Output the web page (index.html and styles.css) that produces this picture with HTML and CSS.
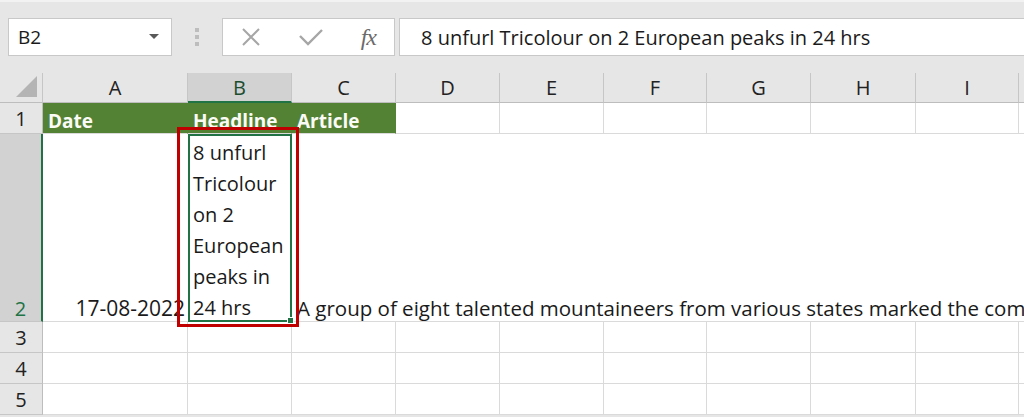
FILE: index.html
```html
<!DOCTYPE html>
<html lang="en">
<head>
    <meta charset="UTF-8">
    <meta name="viewport" content="width=device-width, initial-scale=1.0">
    <link rel="stylesheet" href="styles.css">
</head>
<body>
    <div class="ribbon">
        <div class="namebox">
            <span>B2</span>
            <svg class="drop" width="10" height="6" viewBox="0 0 10 6"><path d="M0 0h10L5 5z" fill="#595959"/></svg>
        </div>
        <div class="grip"><i></i><i></i><i></i></div>
        <div class="fbtns">
            <svg width="20" height="20" viewBox="0 0 20 20"><path d="M2 2L18 18M18 2L2 18" stroke="#a6a6a6" stroke-width="2" fill="none"/></svg>
            <svg width="24" height="18" viewBox="0 0 24 18"><path d="M1 8l8 8L23 2" stroke="#a6a6a6" stroke-width="2.4" fill="none"/></svg>
            <span class="fx">fx</span>
        </div>
        <div class="fbar">8 unfurl Tricolour on 2 European peaks in 24 hrs</div>
    </div>
    <div class="sheet">
        <div class="corner"><svg width="24" height="22" viewBox="0 0 24 22"><path d="M22 0V21H1z" fill="#b4b4b4"/></svg></div>
        <div class="ch">A</div>
        <div class="ch sel">B</div>
        <div class="ch">C</div>
        <div class="ch">D</div>
        <div class="ch">E</div>
        <div class="ch">F</div>
        <div class="ch">G</div>
        <div class="ch">H</div>
        <div class="ch">I</div>
        <div class="ch last"></div>

        <div class="rh">1</div>
        <div class="c head">Date</div>
        <div class="c head">Headline</div>
        <div class="c head">Article</div>
        <div class="c"></div><div class="c"></div><div class="c"></div><div class="c"></div><div class="c"></div><div class="c"></div><div class="c"></div>

        <div class="rh sel">2</div>
        <div class="c date">17-08-2022</div>
        <div class="c active">
            <div class="wrap">8 unfurl<br>Tricolour<br>on 2<br>European<br>peaks in<br>24 hrs</div>
            <span class="handle"></span>
            <span class="mark"></span>
        </div>
        <div class="c article">A group of eight talented mountaineers from various states marked the completion of 75 years of India's independence by unfurling the Tricolour</div>

        <div class="rh">3</div>
        <div class="c"></div><div class="c"></div><div class="c"></div><div class="c"></div><div class="c"></div><div class="c"></div><div class="c"></div><div class="c"></div><div class="c"></div><div class="c"></div>
        <div class="rh">4</div>
        <div class="c"></div><div class="c"></div><div class="c"></div><div class="c"></div><div class="c"></div><div class="c"></div><div class="c"></div><div class="c"></div><div class="c"></div><div class="c"></div>
        <div class="rh">5</div>
        <div class="c"></div><div class="c"></div><div class="c"></div><div class="c"></div><div class="c"></div><div class="c"></div><div class="c"></div><div class="c"></div><div class="c"></div><div class="c"></div>
    </div>
</body>
</html>
```

FILE: styles.css
```css
body {
    margin: 0;
    background: #e6e6e6;
    font-family: "Open Sans", "Noto Sans", sans-serif;
    color: #1a1a1a;
    overflow: hidden;
}
.ribbon {
    display: flex;
    align-items: stretch;
    height: 38px;
    padding: 16px 0 17px 8px;
    border-top: 2px solid #f2f2f2;
}
.namebox {
    width: 164px;
    box-sizing: border-box;
    background: #fff;
    border: 1px solid #c8c8c8;
    display: flex;
    align-items: center;
    justify-content: space-between;
    padding: 0 12px 0 9px;
    font-size: 19px;
}
.grip {
    width: 50px;
    display: flex;
    flex-direction: column;
    align-items: center;
    justify-content: center;
    gap: 3px;
}
.grip i {
    width: 4px;
    height: 4px;
    background: #bdbdbd;
}
.fbtns {
    width: 173px;
    box-sizing: border-box;
    background: #fff;
    border: 1px solid #c8c8c8;
    display: flex;
    align-items: center;
    padding: 0 18px 0 18px;
    justify-content: space-between;
}
.fx {
    font-family: "Liberation Serif", serif;
    font-style: italic;
    font-size: 24px;
    color: #6b6b6b;
    letter-spacing: -1px;
}
.fbar {
    flex: 1;
    margin-left: 4px;
    margin-right: -2px;
    background: #fff;
    border: 1px solid #c8c8c8;
    display: flex;
    align-items: center;
    padding-left: 21px;
    font-size: 20px;
    white-space: nowrap;
    overflow: hidden;
}
.sheet {
    display: grid;
    grid-template-columns: 43px 145px 104px 104px 104px 104px 103px 104px 105px 103px 1fr;
    grid-template-rows: 30px 31px 188px 31px 31px 31px;
    background: #fff;
    font-size: 19px;
}
.corner {
    background: #e6e6e6;
    border-right: 1px solid #c6c6c6;
    border-bottom: 1px solid #bdbdbd;
    display: flex;
    align-items: flex-end;
    justify-content: flex-end;
    padding: 0 3px 4px 0;
}
.ch {
    background: #e6e6e6;
    border-right: 1px solid #c6c6c6;
    border-bottom: 1px solid #bdbdbd;
    display: flex;
    align-items: center;
    justify-content: center;
    color: #222;
    font-size: 20px;
}
.ch.sel {
    background: #d2d2d2;
    border-bottom: 2px solid #217346;
    color: #1d4d30;
}
.ch.last {
    border-right: none;
}
.rh {
    background: #e6e6e6;
    border-right: 1px solid #bdbdbd;
    border-bottom: 1px solid #c6c6c6;
    display: flex;
    align-items: flex-end;
    justify-content: center;
    line-height: 26px;
    padding-bottom: 1px;
    font-size: 20px;
    color: #222;
}
.rh.sel {
    background: #d2d2d2;
    border-right: 2px solid #217346;
    color: #217346;
    line-height: 24px;
    padding-bottom: 0;
}
.c {
    border-right: 1px solid #dadada;
    border-bottom: 1px solid #dadada;
    display: flex;
    align-items: flex-end;
    padding: 0 5px;
    white-space: nowrap;
    line-height: 24px;
}
.head {
    background: #548235;
    border-color: #548235;
    border-bottom-color: #dadada;
    color: #fbfbf6;
    font-weight: bold;
}
.date {
    justify-content: flex-end;
    border-right: none;
    padding-right: 3px;
    font-size: 21px;
    line-height: 26px;
}
.active {
    position: relative;
    border: 2px solid #217346;
    padding: 0 3px;
    font-size: 20px;
}
.wrap {
    line-height: 31px;
    margin-bottom: -3px;
}
.handle {
    position: absolute;
    right: -4px;
    bottom: -4px;
    width: 5px;
    height: 5px;
    background: #217346;
    border: 1px solid #fff;
}
.mark {
    position: absolute;
    left: -13px;
    top: -9px;
    right: -9px;
    bottom: -7px;
    border: 3px solid #c00000;
}
.article {
    grid-column: 4 / -1;
    overflow: hidden;
    border-right: none;
    padding-left: 5px;
    font-size: 20.5px;
    line-height: 26px;
}
```
